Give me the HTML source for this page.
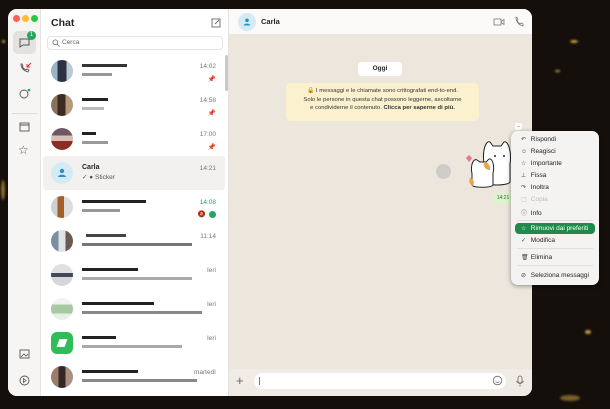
<!DOCTYPE html>
<html><head><meta charset="utf-8"><style>
*{margin:0;padding:0;box-sizing:border-box}
body{width:610px;height:409px;overflow:hidden;background:#140f0b;font-family:"Liberation Sans",sans-serif;position:relative}
.bgl{position:absolute;border-radius:50%;background:#c9a043;filter:blur(1px)}
.win{position:absolute;left:8px;top:9px;width:524px;height:387px;border-radius:9px;overflow:hidden;background:#fff}
.side{position:absolute;left:0;top:0;width:33px;height:387px;background:#f6f5f4;border-right:1px solid #e6e4e2}
.dot{position:absolute;top:6px;width:7px;height:7px;border-radius:50%}
.list{position:absolute;left:33px;top:0;width:188px;height:387px;background:#fff;border-right:1px solid #e4e2df}
.chat{position:absolute;left:221px;top:0;width:303px;height:387px;background:#ece6dd}
.hdr{position:absolute;left:0;top:0;width:303px;height:26px;background:#fbfaf8;border-bottom:1px solid #e8e4de}
.row{position:absolute;left:5px;width:176px;height:34px}
.av{position:absolute;left:5px;top:6px;width:22px;height:22px;border-radius:50%;overflow:hidden}
.t{position:absolute;right:6px;top:9px;font-size:6.5px;color:#777}
.b{position:absolute;height:3px;background:#222}
.g{position:absolute;height:3px;background:#999}
.mi{position:absolute;left:10px;font-size:6.5px;color:#222;white-space:nowrap}
.mi i{font-style:normal;display:inline-block;width:8px;color:#444;font-size:6px}
.sep{position:absolute;left:6px;right:6px;height:1px;background:#e2e0de}
</style></head><body>
<div class="bgl" style="left:2px;top:40px;width:3px;height:3px"></div>
<div class="bgl" style="left:1px;top:180px;width:4px;height:20px;background:#8a6d2b"></div>
<div class="bgl" style="left:570px;top:40px;width:8px;height:3px"></div>
<div class="bgl" style="left:555px;top:70px;width:5px;height:2px"></div>
<div class="bgl" style="left:585px;top:330px;width:6px;height:4px"></div>
<div class="bgl" style="left:560px;top:395px;width:20px;height:6px;background:#7a5f28"></div>
<div class="win">
 <div class="side">
  <div class="dot" style="left:5px;background:#fe5f57"></div>
  <div class="dot" style="left:14px;background:#febc2e"></div>
  <div class="dot" style="left:23px;background:#28c840"></div>
  <div style="position:absolute;left:5px;top:22px;width:23px;height:23px;border-radius:5px;background:#e4e2e0"></div>
  <svg style="position:absolute;left:10px;top:28px" width="13" height="11" viewBox="0 0 13 11"><path d="M2 2h9v6H5l-3 2z" fill="none" stroke="#555" stroke-width="1"/></svg>
  <div style="position:absolute;left:19px;top:22px;width:9px;height:9px;border-radius:50%;background:#25a55a;color:#fff;font-size:6px;text-align:center;line-height:9px">1</div>
  <svg style="position:absolute;left:10px;top:53px" width="14" height="12" viewBox="0 0 14 12"><path d="M3 2c0 4 3 7 7 8l1-2-2-1-1 1C6 7 5 6 4 5l1-1-1-2z" fill="none" stroke="#555" stroke-width=".9"/><path d="M13 1l-4 4M9 2v3h3" stroke="#e23" fill="none" stroke-width="1"/></svg>
  <svg style="position:absolute;left:10px;top:79px" width="14" height="12" viewBox="0 0 14 12"><circle cx="6" cy="6" r="4" fill="none" stroke="#555" stroke-width=".9"/><circle cx="11" cy="2" r="1.3" fill="#25a55a"/></svg>
  <div style="position:absolute;left:4px;top:104px;width:25px;height:1px;background:#ddd"></div>
  <svg style="position:absolute;left:11px;top:113px" width="11" height="10"><rect x="1" y="1" width="9" height="8" fill="none" stroke="#555" stroke-width=".9"/><path d="M1 3h9" stroke="#555" stroke-width=".9"/></svg>
  <div style="position:absolute;left:10px;top:134px;font-size:12px;color:#555">☆</div>
  <svg style="position:absolute;left:11px;top:340px" width="11" height="10"><rect x="1" y="1" width="9" height="8" fill="none" stroke="#555" stroke-width=".9"/><path d="M2 8l3-3 2 2 2-2" stroke="#555" fill="none" stroke-width=".8"/></svg>
  <svg style="position:absolute;left:11px;top:366px" width="11" height="11"><circle cx="5.5" cy="5.5" r="4.5" fill="none" stroke="#555" stroke-width=".9"/><path d="M4.5 3.5l2.5 2-2.5 2z" fill="none" stroke="#555" stroke-width=".8"/></svg>
 </div>
 <div class="list">
  <div style="position:absolute;left:10px;top:8px;font-size:10.5px;font-weight:bold;color:#222">Chat</div>
  <svg style="position:absolute;left:170px;top:9px" width="10" height="10"><rect x="1" y="1" width="8" height="8" fill="none" stroke="#666" stroke-width=".9"/><path d="M4 6l4-4" stroke="#666" stroke-width=".9"/></svg>
  <div style="position:absolute;left:6px;top:27px;width:176px;height:14px;border:1px solid #e6e4e2;border-radius:4px;font-size:6.5px;color:#666;line-height:12px;padding-left:14px">Cerca</div>
  <svg style="position:absolute;left:11px;top:30px" width="8" height="8"><circle cx="3.3" cy="3.3" r="2.4" fill="none" stroke="#666" stroke-width=".8"/><path d="M5 5l2.5 2.5" stroke="#666" stroke-width=".8"/></svg>
  <div style="position:absolute;left:184px;top:46px;width:3px;height:36px;border-radius:2px;background:#c9c9c9"></div>

  <div class="row" style="top:45px"><div class="av" style="background:linear-gradient(90deg,#9bb3c9 0 30%,#2c3443 30% 70%,#b9c9d8 70%)"></div><div class="b" style="left:36px;top:10px;width:45px;background:#333"></div><div class="g" style="left:36px;top:19px;width:30px"></div><div class="t">14:02</div><div class="t" style="top:21px;color:#666">📌</div></div>
  <div class="row" style="top:79px"><div class="av" style="background:linear-gradient(90deg,#8a7459 0 30%,#3a2c22 30% 65%,#b59a79 65%)"></div><div class="b" style="left:36px;top:10px;width:26px"></div><div class="g" style="left:36px;top:19px;width:22px;background:#bbb"></div><div class="t">14:58</div><div class="t" style="top:21px">📌</div></div>
  <div class="row" style="top:113px"><div class="av" style="background:linear-gradient(180deg,#6d5866 0 35%,#d9c0b5 35% 60%,#8b2d22 60%)"></div><div class="b" style="left:36px;top:10px;width:14px"></div><div class="g" style="left:36px;top:19px;width:26px"></div><div class="t">17:00</div><div class="t" style="top:21px">📌</div></div>
  <div class="row" style="top:147px;left:2px;width:182px;background:#f2f1f0;border-radius:3px"><div class="av" style="left:8px;background:#d4ebf6"><svg width="22" height="22"><circle cx="11" cy="9" r="2.2" fill="#2f8fc0"/><path d="M7 15c0-3 8-3 8 0z" fill="#2f8fc0"/></svg></div><div style="position:absolute;left:39px;top:8px;font-size:7px;font-weight:bold;color:#222">Carla</div><div style="position:absolute;left:39px;top:17px;font-size:6.5px;color:#555">✓ ● Sticker</div><div class="t" style="right:9px">14:21</div></div>
  <div class="row" style="top:181px"><div class="av" style="background:linear-gradient(90deg,#cfcfcf 0 30%,#a35f2b 30% 60%,#ddd 60%)"></div><div class="b" style="left:36px;top:10px;width:64px"></div><div class="g" style="left:36px;top:19px;width:38px"></div><div class="t" style="color:#25a55a">14:08</div><div style="position:absolute;right:6px;top:21px;width:7px;height:7px;border-radius:50%;background:#25a55a"></div><div class="t" style="top:20px;right:16px;color:#888">🔕</div></div>
  <div class="row" style="top:215px"><div class="av" style="background:linear-gradient(90deg,#7a8fa3 0 35%,#dde3e6 35% 65%,#6a5b51 65%)"></div><div class="g" style="left:40px;top:10px;width:40px;background:#444"></div><div class="g" style="left:36px;top:19px;width:110px;background:#777"></div><div class="t">11:14</div></div>
  <div class="row" style="top:249px"><div class="av" style="background:linear-gradient(180deg,#dfe0e3 0 40%,#44495a 40% 60%,#d5d6d9 60%)"></div><div class="b" style="left:36px;top:10px;width:56px"></div><div class="g" style="left:36px;top:19px;width:110px;background:#aaa"></div><div class="t">Ieri</div></div>
  <div class="row" style="top:283px"><div class="av" style="background:linear-gradient(180deg,#f1f3ef 0 30%,#a9c8a4 30% 70%,#e8efe6 70%)"></div><div class="b" style="left:36px;top:10px;width:72px"></div><div class="g" style="left:36px;top:19px;width:120px;background:#888"></div><div class="t">Ieri</div></div>
  <div class="row" style="top:317px"><div class="av" style="border-radius:6px;background:#2fbd59"><div style="position:absolute;left:7px;top:7px;width:8px;height:8px;background:#fff;transform:skew(-20deg)"></div></div><div class="b" style="left:36px;top:10px;width:34px"></div><div class="g" style="left:36px;top:19px;width:100px;background:#aaa"></div><div class="t">Ieri</div></div>
  <div class="row" style="top:351px"><div class="av" style="background:linear-gradient(90deg,#9b7d6b 0 35%,#332826 35% 65%,#a99080 65%)"></div><div class="b" style="left:36px;top:10px;width:56px"></div><div class="g" style="left:36px;top:19px;width:115px;background:#888"></div><div class="t">martedì</div></div>
 </div>
 <div class="chat">
  <div class="hdr"><div style="position:absolute;left:9px;top:4px;width:18px;height:18px;border-radius:50%;background:#d4ebf6"><svg width="18" height="18"><circle cx="9" cy="7.3" r="1.8" fill="#2f8fc0"/><path d="M5.8 12.5c0-2.5 6.4-2.5 6.4 0z" fill="#2f8fc0"/></svg></div><div style="position:absolute;left:32px;top:8px;font-size:7.5px;font-weight:bold;color:#222">Carla</div>
   <svg style="position:absolute;left:264px;top:8px" width="12" height="10"><rect x="1" y="2" width="7" height="6" fill="none" stroke="#777" stroke-width=".8"/><path d="M8 4.5l3-2v5l-3-2" fill="none" stroke="#777" stroke-width=".8"/></svg>
   <svg style="position:absolute;left:285px;top:7px" width="10" height="11"><path d="M2 1c0 5 3 8 7 9l0-2-2-1-1 1C4.5 7 3.5 6 3 4.5l1-1-1-2z" fill="none" stroke="#777" stroke-width=".8"/></svg>
  </div>
  <div style="position:absolute;left:129px;top:53px;width:44px;height:14px;background:#fff;border-radius:4px;font-size:6.5px;font-weight:bold;text-align:center;line-height:14px;color:#222">Oggi</div>
  <div style="position:absolute;left:57px;top:74px;width:193px;height:38px;background:#fcf1cf;border-radius:5px;font-size:5.9px;line-height:8.6px;text-align:center;color:#333;padding-top:4px">🔒 I messaggi e le chiamate sono crittografati end-to-end.<br>Solo le persone in questa chat possono leggerne, ascoltarne<br>e condividerne il contenuto. <b>Clicca per saperne di più.</b></div>
  <div style="position:absolute;left:207px;top:155px;width:15px;height:15px;border-radius:50%;background:#cfccc8"></div>
  <svg style="position:absolute;left:233px;top:125px" width="62" height="58" viewBox="0 0 62 58"><path d="M4 24l3-3 3 3-3 4z" fill="#e8748a"/><path d="M22 30c-2-14 2-24 6-22l3 4h8l3-4c4-2 8 10 6 22l0 18c-2 4-24 4-26 0z" fill="#fff" stroke="#222" stroke-width="1"/><path d="M10 40c-2-10 2-16 5-14l3 2h6l3-3c3-1 6 6 4 14l0 12c-2 3-20 3-21 0z" fill="#fff" stroke="#222" stroke-width="1"/><path d="M22 28c4 0 7 4 6 8-4 0-7-3-6-8z" fill="#e9a34a"/><path d="M8 44c3 0 5 4 3 8-3-1-5-5-3-8z" fill="#e9a34a"/><circle cx="33" cy="22" r="1" fill="#222"/><circle cx="42" cy="22" r="1" fill="#222"/></svg>
  <div style="position:absolute;left:264px;top:184px;width:20px;height:10px;background:#d8f7c9;border-radius:3px;font-size:5px;line-height:10px;text-align:center;color:#555">14:21</div>
  <div style="position:absolute;left:286px;top:114px;width:7px;height:7px;border-radius:2px;background:#fff;font-size:5px;text-align:center;line-height:7px;color:#666">⌄</div>
  <div style="position:absolute;left:0;top:360px;width:303px;height:27px;background:#f0ebe4"></div>
  <div style="position:absolute;left:7px;top:365px;font-size:13px;color:#666;line-height:13px">+</div>
  <div style="position:absolute;left:25px;top:364px;width:252px;height:16px;background:#fff;border-radius:8px"></div>
  <div style="position:absolute;left:30px;top:368px;width:1px;height:8px;background:#25a55a"></div>
  <svg style="position:absolute;left:263px;top:366px" width="11" height="11"><circle cx="5.5" cy="5.5" r="4.3" fill="none" stroke="#666" stroke-width=".8"/><path d="M3.5 6.5q2 2 4 0" stroke="#666" fill="none" stroke-width=".7"/></svg>
  <svg style="position:absolute;left:286px;top:366px" width="10" height="12"><rect x="3" y="1" width="4" height="7" rx="2" fill="none" stroke="#666" stroke-width=".8"/><path d="M1.5 6q3.5 5 7 0M5 9.5v2" stroke="#666" fill="none" stroke-width=".8"/></svg>
 </div>
</div>
<div style="position:absolute;left:511px;top:131px;width:88px;height:154px;background:#f5f3f1;border-radius:7px;box-shadow:0 1px 5px rgba(0,0,0,.4)">
 <div class="mi" style="top:5px"><i>↶</i> Rispondi</div>
 <div class="mi" style="top:17px"><i>☺</i> Reagisci</div>
 <div class="mi" style="top:29px"><i>☆</i> Importante</div>
 <div class="mi" style="top:41px"><i>⊥</i> Fissa</div>
 <div class="mi" style="top:53px"><i>↷</i> Inoltra</div>
 <div class="mi" style="top:65px;color:#bbb"><i style="color:#bbb">▢</i> Copia</div>
 <div class="mi" style="top:77px"><i>ⓘ</i> Info</div>
 <div class="sep" style="top:89px"></div>
 <div style="position:absolute;left:4px;top:92px;width:80px;height:11px;background:#1e8a4b;border-radius:4px"></div>
 <div class="mi" style="top:94px;color:#fff"><i style="color:#fff">☆</i> Rimuovi dai preferiti</div>
 <div class="mi" style="top:106px"><i>✓</i> Modifica</div>
 <div class="sep" style="top:117px"></div>
 <div class="mi" style="top:123px"><i>🗑</i> Elimina</div>
 <div class="sep" style="top:134px"></div>
 <div class="mi" style="top:141px"><i>⊘</i> Seleziona messaggi</div>
</div>
</body></html>
